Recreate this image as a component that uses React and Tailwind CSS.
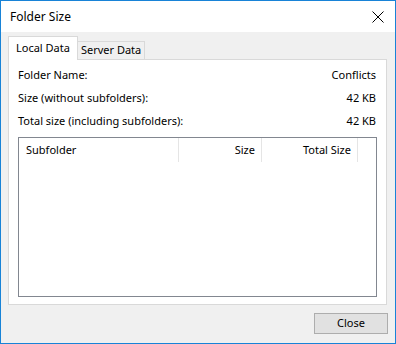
export default function App() {
  const rows = [
    ["Folder Name:", "Conflicts"],
    ["Size (without subfolders):", "42 KB"],
    ["Total size (including subfolders):", "42 KB"],
  ];

  return (
    <div
      className="w-[396px] h-[344px] border border-[#1883d7] flex flex-col text-[11px] text-black"
      style={{ fontFamily: '"Noto Sans", "Open Sans", sans-serif' }}
    >
      {/* title bar */}
      <div className="h-[31px] bg-white flex items-center justify-between pl-[9px] pr-[10px]">
        <span className="text-[12px]">Folder Size</span>
        <svg width="12" height="12" viewBox="0 0 12 12" className="mr-[1px]">
          <path d="M0.5 0.5 L11.5 11.5 M11.5 0.5 L0.5 11.5" stroke="#000" strokeWidth="1" fill="none" />
        </svg>
      </div>

      <div className="flex-1 bg-[#f0f0f0] flex flex-col pl-[7px] pr-[8px] pt-[4px]">
        {/* tabs */}
        <div className="flex items-end h-[23px]">
          <div className="h-[24px] -mb-[1px] bg-white border border-b-0 border-[#d9d9d9] px-[7px] flex items-center relative z-10">
            Local Data
          </div>
          <div className="h-[18px] border border-l-0 border-b-0 border-[#d9d9d9] px-[3px] flex items-center">
            Server Data
          </div>
        </div>

        {/* panel */}
        <div className="h-[246px] bg-white border border-[#d9d9d9] px-[9px] pt-[4px]">
          {rows.map(([k, v]) => (
            <div key={k} className="h-[23px] flex items-center justify-between pr-[1px]">
              <span>{k}</span>
              <span>{v}</span>
            </div>
          ))}

          <div className="mt-[4px] h-[160px] border border-[#828790] bg-white">
            <div className="h-[24px] flex items-center">
              <div className="w-[160px] h-[24px] border-r border-[#e5e5e5] pl-[7px] flex items-center">Subfolder</div>
              <div className="w-[83px] h-[24px] border-r border-[#e5e5e5] pr-[6px] flex items-center justify-end">Size</div>
              <div className="w-[96px] h-[24px] border-r border-[#e5e5e5] pr-[6px] flex items-center justify-end">Total Size</div>
            </div>
          </div>
        </div>

        {/* footer */}
        <div className="flex-1 flex justify-end items-start pt-[8px]">
          <button className="w-[74px] h-[21px] bg-[#e1e1e1] border border-[#adadad] flex items-center justify-center mr-[-1px]">
            Close
          </button>
        </div>
      </div>
    </div>
  );
}
